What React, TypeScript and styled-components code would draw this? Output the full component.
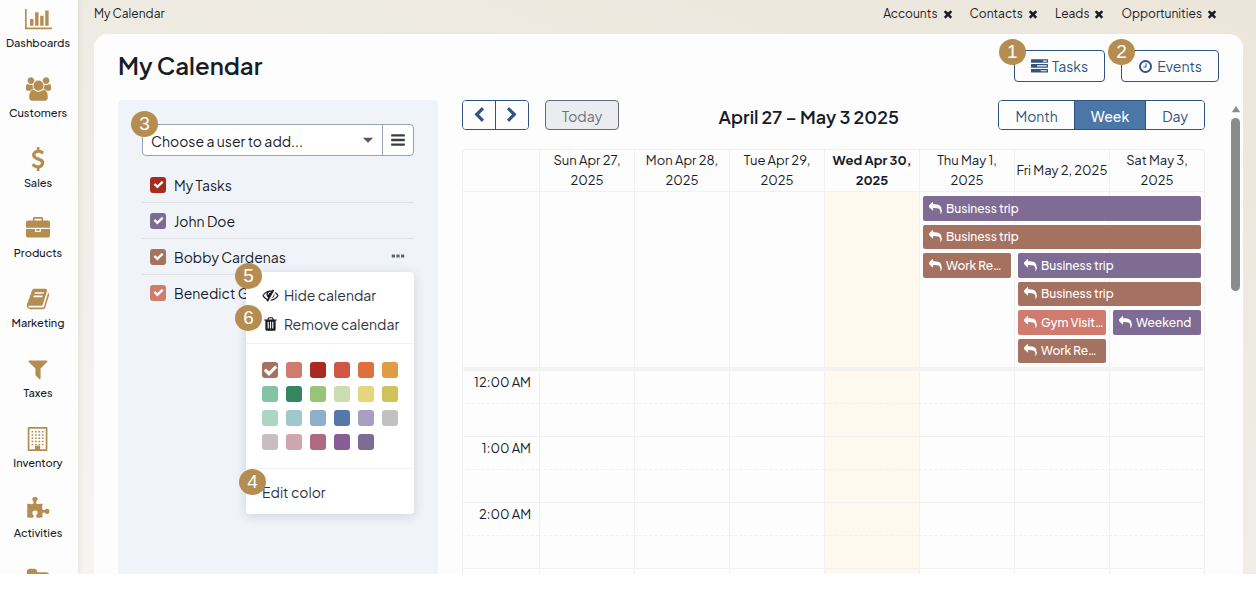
import React from "react";
import styled, { createGlobalStyle } from "styled-components";

const GOLD = "#b58d50";
const INK = "#181c27";
const BLUE = "#2f5480";
const LINE = "#f1f1f2";

const GlobalStyle = createGlobalStyle`
  *, *::before, *::after { box-sizing: border-box; }
  body { margin: 0; background: #fff; }
  body, button, select, input {
    font-family: "Plus Jakarta Sans", Figtree, Inter, "Liberation Sans", sans-serif;
    color: ${INK};
  }
  button { padding: 0; cursor: pointer; }
  ul { list-style: none; margin: 0; padding: 0; }
`;

const BAR = (y: number) =>
  `M1664 ${y}v128q0 26-19 45t-45 19h-1408q-26 0-45-19t-19-45v-128q0-26 19-45t45-19h1408q26 0 45 19t19 45z`;
const TASK = (y: number) =>
  `M1792 ${y}v256q0 26-19 45t-45 19h-1664q-26 0-45-19t-19-45v-256q0-26 19-45t45-19h1664q26 0 45 19t19 45z`;
const SLOT = (x: number) =>
  `M${x} 1376v-704q0-14-9-23t-23-9h-64q-14 0-23 9t-9 23v704q0 14 9 23t23 9h64q14 0 23-9t9-23z`;

const windows = [300, 540, 780, 1020, 1260]
  .map((y) => [480, 736, 992, 1248].map((x) => `M${x - 64} ${y}h128v110h-128z`).join(""))
  .join("");

const PATHS = {
  check:
    "M1671 566q0 40-28 68l-724 724-136 136q-28 28-68 28t-68-28l-136-136-362-362q-28-28-28-68t28-68l136-136q28-28 68-28t68 28l294 295 656-657q28-28 68-28t68 28l136 136q28 28 28 68z",
  bars: BAR(1344) + BAR(832) + BAR(320),
  times:
    "M1490 1322q0 40-28 68l-136 136q-28 28-68 28t-68-28l-294-294-294 294q-28 28-68 28t-68-28l-136-136q-28-28-28-68t28-68l294-294-294-294q-28-28-28-68t28-68l136-136q28-28 68-28t68 28l294 294 294-294q28-28 68-28t68 28l136 136q28 28 28 68t-28 68l-294 294 294 294q28 28 28 68z",
  filter:
    "M1595 295q17 41-14 70l-493 493v742q0 42-39 59-13 5-25 5-27 0-45-19l-256-256q-19-19-19-45v-486l-493-493q-31-29-14-70 17-39 59-39h1280q42 0 59 39z",
  left: "M1427 301l-531 531 531 531q19 19 19 45t-19 45l-166 166q-19 19-45 19t-45-19l-742-742q-19-19-19-45t19-45l742-742q19-19 45-19t45 19l166 166q19 19 19 45t-19 45z",
  right:
    "M1363 877l-742 742q-19 19-45 19t-45-19l-166-166q-19-19-19-45t19-45l531-531-531-531q-19-19-19-45t19-45l166-166q19-19 45-19t45 19l742 742q19 19 19 45t-19 45z",
  tasks:
    TASK(1216) + TASK(704) + TASK(192) + "M1024 1408h640v-128h-640zM640 896h1024v-128h-1024zM1280 384h384v-128h-384z",
  clock:
    "M1024 544v448q0 14-9 23t-23 9h-320q-14 0-23-9t-9-23v-64q0-14 9-23t23-9h224v-352q0-14 9-23t23-9h64q14 0 23 9t9 23zm416 352q0-148-73-273t-198-198-273-73-273 73-198 198-73 273 73 273 198 198 273 73 273-73 198-198 73-273zm224 0q0 209-103 385.5t-279.5 279.5-385.5 103-385.5-103-279.5-279.5-103-385.5 103-385.5 279.5-279.5 385.5-103 385.5 103 279.5 279.5 103 385.5z",
  chart:
    "M640 896v512h-256v-512h256zm384-512v1024h-256v-1024h256zm1024 1152v128h-2048v-1536h128v1408h1920zm-640-896v768h-256v-768h256zm384-384v1152h-256v-1152h256z",
  reply:
    "M1792 1120q0 166-127 451-3 7-10.5 24t-13.5 30-13 22q-12 17-28 17-15 0-23.5-10t-8.5-25q0-9 2.5-26.5t2.5-23.5q5-68 5-123 0-112-19.5-200.5t-54-153.5-89-112-117-78-146.5-46.5-169-21-192.5-5.5h-224v256q0 26-19 45t-45 19-45-19l-512-512q-19-19-19-45t19-45l512-512q19-19 45-19t45 19 19 45v256h224q713 0 875 403 53 134 53 333z",
  users:
    "M657 896q-162 5-265 128h-134q-82 0-138-40.5t-56-118.5q0-353 124-353 6 0 43.5 21t97.5 42.5 119 21.5q67 0 133-23-5 37-5 66 0 139 81 256zm1071 637q0 120-73 189.5t-194 69.5h-874q-121 0-194-69.5t-73-189.5q0-53 3.5-103.5t14-109 26.5-108.5 43-97.5 62-81 85.5-53.5 111.5-20q10 0 43 21.5t73 48 107 48 135 21.5 135-21.5 107-48 73-48 43-21.5q61 0 111.5 20t85.5 53.5 62 81 43 97.5 26.5 108.5 14 109 3.5 103.5zm-1024-1277q0 106-75 181t-181 75-181-75-75-181 75-181 181-75 181 75 75 181zm704 384q0 159-112.5 271.5t-271.5 112.5-271.5-112.5-112.5-271.5 112.5-271.5 271.5-112.5 271.5 112.5 112.5 271.5zm576 225q0 78-56 118.5t-138 40.5h-134q-103-123-265-128 81-117 81-256 0-29-5-66 66 23 133 23 59 0 119-21.5t97.5-42.5 43.5-21q124 0 124 353zm-128-609q0 106-75 181t-181 75-181-75-75-181 75-181 181-75 181 75 75 181z",
  dollar:
    "M1362 1185q0 153-99.5 263.5t-258.5 136.5v175q0 14-9 23t-23 9h-135q-13 0-22.5-9.5t-9.5-22.5v-175q-66-9-127.5-31t-101.5-44.5-74-48-46.5-37.5-17.5-18q-17-21-2-41l103-135q7-10 23-12 15-2 24 9l2 2q113 99 243 125 37 8 74 8 81 0 142.5-43t61.5-122q0-28-15-53t-33.5-42-58.5-37.5-66-32-80-32.5q-39-16-61.5-25t-61.5-26.5-62.5-31-56.5-35.5-53.5-42.5-43.5-49-35.5-58-21-66.5-8.5-78q0-138 98-242t255-134v-180q0-13 9.5-22.5t22.5-9.5h135q14 0 23 9t9 23v176q57 6 110.5 23t87 33.5 63.5 37.5 39 29 15 14q17 18 5 38l-81 146q-8 15-23 16-14 3-27-7-3-3-14.5-12t-39-26.5-58.5-32-74.5-26-85.5-11.5q-95 0-155 43t-60 111q0 26 8.5 48t29.5 41.5 39.5 33 56 31 60.5 27 70 27.5q53 20 81 31.5t76 35 75.5 42.5 62 50 53 63.5 31.5 76.5 13 94z",
  briefcase:
    "M640 256h512v-128h-512v128zm1152 640v480q0 66-47 113t-113 47h-1472q-66 0-113-47t-47-113v-480h672v160q0 26 19 45t45 19h320q26 0 45-19t19-45v-160h672zm-768 0v128h-256v-128h256zm768-480v384h-1792v-384q0-66 47-113t113-47h352v-160q0-40 28-68t68-28h576q40 0 68 28t28 68v160h352q66 0 113 47t47 113z",
  book: "M1703 478q40 57 18 129l-275 906q-19 64-76.5 107.5t-122.5 43.5h-923q-77 0-148.5-53.5t-99.5-131.5q-24-67-2-127 0-4 3-27t4-37q1-8-3-21.5t-3-19.5q2-11 8-21t16.5-23.5 16.5-23.5q23-38 45-91.5t30-91.5q3-10 .5-30t-.5-28q3-11 17-28t17-23q21-36 42-92t25-90q1-9-2.5-32t.5-28q4-13 22-30.5t22-22.5q19-26 42.5-84.5t27.5-96.5q1-8-3-25.5t-2-26.5q2-8 9-18t18-23 17-21q8-12 16.5-30.5t15-35 16-36 19.5-32 26.5-23.5 36-11.5 47.5 5.5l-1 3q38-9 51-9h761q74 0 114 56t18 130l-274 906q-36 119-71.5 153.5t-128.5 34.5h-869q-27 0-38 15-11 16-1 43 24 70 144 70h923q29 0 56-15.5t35-41.5l300-987q7-22 5-57 38 15 59 43zm-1064 2q-4 13 2 22.5t20 9.5h608q13 0 25.5-9.5t16.5-22.5l21-64q4-13-2-22.5t-20-9.5h-608q-13 0-25.5 9.5t-16.5 22.5zm-83 256q-4 13 2 22.5t20 9.5h608q13 0 25.5-9.5t16.5-22.5l21-64q4-13-2-22.5t-20-9.5h-608q-13 0-25.5 9.5t-16.5 22.5z",
  building:
    "M192 0h1344q64 0 64 64v1664q0 64-64 64h-1344q-64 0-64-64v-1664q0-64 64-64zM256 128v1536h416v-256h384v256h416v-1536z" +
    windows,
  puzzle:
    "M1755 1083q0 81-44.5 135t-123.5 54q-41 0-77.5-17.5t-59-38-56.5-38-71-17.5q-110 0-110 124 0 39 16 115t15 115v5q-22 0-33 1-34 3-97.5 11.5t-115.5 13.5-98 5q-61 0-103-26.5t-42-83.5q0-37 17.5-71t38-56.5 38-59 17.5-77.5q0-79-54-123.5t-135-44.5q-84 0-143 45.5t-59 127.5q0 43 15 83t33.5 64.5 33.5 53 15 50.5q0 45-46 89-37 35-117 35-95 0-245-24-9-2-27.5-4t-27.5-4l-13-2q-1 0-3-1-2 0-2-1v-1024q2 1 17.5 3.5t34 5 21.5 3.5q150 24 245 24 80 0 117-35 46-44 46-89 0-22-15-50.5t-33.5-53-33.5-64.5-15-83q0-82 59-127.5t144-45.5q80 0 134 44.5t54 123.5q0 41-17.5 77.5t-38 59-38 56.5-17.5 71q0 57 42 83.5t103 26.5q64 0 180-15t163-17v2q-1 2-3.5 17.5t-5 34-3.5 21.5q-24 150-24 245 0 80 35 117 44 46 89 46 22 0 50.5-15t53-33.5 64.5-33.5 83-15q82 0 127.5 59t45.5 143z",
  folder:
    "M1728 608v704q0 92-66 158t-158 66h-1216q-92 0-158-66t-66-158v-960q0-92 66-158t158-66h320q92 0 158 66t66 158v32h672q92 0 158 66t66 158z",
  trash:
    SLOT(704) +
    SLOT(960) +
    SLOT(1216) +
    "M672 384h448l-48-117q-7-9-17-11h-317q-10 2-17 11zM1600 416v64q0 14-9 23t-23 9h-96v948q0 83-47 143.5t-113 60.5h-832q-66 0-113-58.5t-47-141.5v-952h-96q-14 0-23-9t-9-23v-64q0-14 9-23t23-9h309l70-167q15-37 54-63t79-26h320q40 0 79 26t54 63l70 167h309q14 0 23 9t9 23z",
  eyeSlash:
    "M555 1335l78-141q-87-63-136-159t-49-203q0-121 61-225-229 117-381 353 167 258 427 375zm389-759q0-20-14-34t-34-14q-125 0-214.5 89.5t-89.5 214.5q0 20 14 34t34 14 34-14 14-34q0-86 61-147t147-61q20 0 34-14t14-34zm363-191q0 7-1 9-106 189-316 567t-315 566l-49 89q-10 16-28 16-12 0-134-70-16-10-16-28 0-12 44-87-143-65-263.5-173t-208.5-245q-20-31-20-69t20-69q153-235 380-371t496-136q89 0 180 17l54-97q10-16 28-16 5 0 18 6t31 15.5 33 18.5 31.5 18.5 19.5 11.5q16 10 16 27zm37 447q0 139-79 253.5t-209 164.5l280-502q8 45 8 84zm448 128q0 35-20 69-39 64-109 145-150 172-347.5 267t-419.5 95l74-132q212-18 392.5-137t301.5-307q-115-179-282-294l63-112q95 64 182.5 153t144.5 184q20 34 20 69z",
  caret: "M320 640h1152l-576 576z",
  up: "M896 380l760 1100h-1520z",
  dots: "M160 704h288q64 0 64 64v256q0 64-64 64h-288q-64 0-64-64v-256q0-64 64-64zM752 704h288q64 0 64 64v256q0 64-64 64h-288q-64 0-64-64v-256q0-64 64-64zM1344 704h288q64 0 64 64v256q0 64-64 64h-288q-64 0-64-64v-256q0-64 64-64z",
};

type IconName = keyof typeof PATHS;

const Svg = styled.svg`
  display: block;
  flex: none;
  fill: currentColor;
`;

function Icon({ name, size, box = 1792 }: { name: IconName; size: number; box?: number }) {
  return (
    <Svg width={Math.round((size * box) / 1792)} height={size} viewBox={`0 0 ${box} 1792`} aria-hidden="true">
      <path fillRule="evenodd" d={PATHS[name]} />
    </Svg>
  );
}

const Shell = styled.div`
  display: flex;
  height: calc(100vh - 29px);
  overflow: hidden;
  background: linear-gradient(200deg, #ece6da 0%, #eeebe3 40%, #f6f5f1 100%);
`;

const SideNav = styled.nav`
  width: 78px;
  flex: none;
  padding-top: 7px;
  background: #fdfdfd;
  box-shadow: 0 0 6px rgba(60, 50, 30, 0.12);
`;

const NavList = styled.ul`
  display: flex;
  flex-direction: column;
  gap: 26px;
`;

const NavLink = styled.a`
  display: flex;
  flex-direction: column;
  align-items: center;
  gap: 4px;
  padding-right: 2px;
  color: ${GOLD};
  text-decoration: none;

  span {
    font-size: 11px;
    font-weight: 500;
    line-height: 16px;
    color: ${INK};
  }
`;

const Main = styled.main`
  flex: 1;
  min-width: 0;
  display: flex;
  flex-direction: column;
  padding: 0 13px 0 16px;
`;

const TopBar = styled.header`
  display: flex;
  align-items: center;
  justify-content: space-between;
  height: 34px;
  flex: none;
  padding: 0 25px 6px 0;
  font-size: 12px;
  line-height: 16px;
`;

const TabList = styled.ul`
  display: flex;
  gap: 16px;
`;

const Tab = styled.li`
  display: flex;
  align-items: center;
  gap: 4px;

  a {
    color: ${INK};
    text-decoration: none;
  }
`;

const PlainButton = styled.button`
  display: flex;
  border: 0;
  background: none;
`;

const MoreButton = styled(PlainButton)`
  color: #5f636d;
  padding: 0 1px 1px 0;
`;

const Panel = styled.section`
  flex: 1;
  min-height: 0;
  display: flex;
  flex-direction: column;
  background: #fdfdfd;
  border-radius: 14px 14px 0 0;
`;

const PanelHead = styled.div`
  display: flex;
  align-items: center;
  justify-content: space-between;
  flex: none;
  height: 66px;
  padding: 0 24px 2px;
`;

const PageTitle = styled.h1`
  margin: 0;
  padding-bottom: 2px;
  font-size: 24px;
  font-weight: 600;
  line-height: 32px;
`;

const Actions = styled.div`
  display: flex;
  gap: 16px;
`;

const Anchor = styled.div`
  position: relative;
`;

const ActionButton = styled.button`
  display: flex;
  align-items: center;
  gap: 4px;
  height: 32px;
  padding: 0 16px;
  border: 1px solid ${BLUE};
  border-radius: 4px;
  background: #fdfdfd;
  color: ${BLUE};
  font-size: 14px;
`;

const Badge = styled.span<{ $top: number; $left: number }>`
  position: absolute;
  z-index: 3;
  top: ${(p) => p.$top}px;
  left: ${(p) => p.$left}px;
  width: 27px;
  height: 26px;
  border-radius: 50%;
  background: ${GOLD};
  color: #fff;
  font: 19px/26px "Liberation Sans", Arial, sans-serif;
  text-align: center;
`;

const Body = styled.div`
  flex: 1;
  min-height: 0;
  display: flex;
  gap: 24px;
  padding-left: 24px;
`;

const UserPanel = styled.aside`
  width: 320px;
  flex: none;
  padding: 24px;
  background: #f0f4f9;
  border-radius: 4px 4px 0 0;
`;

const Picker = styled.div`
  position: relative;
  display: flex;
  height: 32px;
  border: 1px solid #98a2b8;
  border-radius: 4px;
  background: #fff;
`;

const SelectWrap = styled.label`
  flex: 1;
  display: grid;
  align-items: center;
  color: #55585f;

  > * {
    grid-area: 1 / 1;
  }
  > svg {
    justify-self: end;
    margin-right: 6px;
    pointer-events: none;
  }
`;

const Select = styled.select`
  appearance: none;
  width: 100%;
  height: 30px;
  padding: 1px 28px 0 8px;
  border: 0;
  background: none;
  font-size: 14px;
`;

const ListButton = styled.button`
  display: grid;
  place-items: center;
  width: 31px;
  border: 0;
  border-left: 1px solid #98a2b8;
  background: none;
  color: #3a3d46;
`;

const UserList = styled.ul`
  margin-top: 11px;
`;

const UserRow = styled.li`
  position: relative;
  display: flex;
  align-items: center;
  justify-content: space-between;
  height: 36px;
  padding: 0 8px;
  border-bottom: 1px solid #e0e1e4;
  font-size: 14px;

  &:last-child {
    border-bottom-color: transparent;
  }
`;

const UserLabel = styled.label`
  display: flex;
  align-items: center;
  gap: 8px;
`;

const Tick = styled.span`
  display: grid;
  place-items: center;
  color: #fff;

  > * {
    grid-area: 1 / 1;
  }
  > svg {
    pointer-events: none;
  }
`;

const ColorInput = styled.input<{ $color: string }>`
  appearance: none;
  width: 16px;
  height: 16px;
  margin: 0;
  border-radius: 3px;
  background: ${(p) => p.$color};
`;

const Menu = styled.div`
  position: absolute;
  z-index: 2;
  top: 33px;
  right: 0;
  width: 168px;
  background: #fff;
  border-radius: 4px;
  box-shadow: 0 2px 12px rgba(30, 40, 60, 0.16);
`;

const MenuGroup = styled.div`
  padding: 8px 0 5px;
`;

const MenuButton = styled.button`
  display: flex;
  align-items: center;
  gap: 5px;
  width: 100%;
  height: 29px;
  padding: 0 16px;
  border: 0;
  background: none;
  color: #30343f;
  font-size: 14px;
  white-space: nowrap;

  svg {
    width: 17px;
    color: ${INK};
  }
`;

const Swatches = styled.fieldset`
  display: grid;
  grid-template-columns: repeat(6, 16px);
  gap: 8px;
  min-width: 0;
  margin: 0;
  padding: 18px 16px;
  border: solid #f0f1f3;
  border-width: 1px 0;
`;

const MenuFoot = styled.div`
  padding: 8px 0;
`;

const Calendar = styled.section`
  flex: 1;
  min-width: 0;
`;

const Toolbar = styled.div`
  display: flex;
  align-items: center;
  justify-content: space-between;
  height: 30px;
  margin-bottom: 19px;
`;

const ToolGroup = styled.div`
  display: flex;
  gap: 16px;
`;

const ButtonSet = styled.div`
  display: flex;
  border: 1px solid ${BLUE};
  border-radius: 4px;
  overflow: hidden;
`;

const SetButton = styled.button<{ $active?: boolean; $icon?: boolean }>`
  display: flex;
  align-items: center;
  height: 28px;
  padding: ${(p) => (p.$icon ? "0 8px" : "2px 16px 0")};
  border: 0;
  background: ${(p) => (p.$active ? "#4a76a8" : "#fdfdfd")};
  color: ${(p) => (p.$active ? "#fff" : BLUE)};
  font-size: 14px;
  font-weight: ${(p) => (p.$active ? 500 : 400)};

  & + & {
    border-left: 1px solid ${BLUE};
  }
`;

const TodayButton = styled.button`
  height: 30px;
  padding: 2px 16px 0;
  border: 1px solid #646b7a;
  border-radius: 4px;
  background: #ebecf0;
  color: #6d717b;
  font-size: 14px;
`;

const RangeTitle = styled.h2`
  margin: 0;
  padding-top: 4px;
  font-size: 18px;
  font-weight: 600;
  line-height: 24px;
`;

const Grid = styled.div`
  border: solid ${LINE};
  border-width: 1px 1px 0 0;
  border-radius: 4px 4px 0 0;
`;

const Table = styled.table`
  width: 100%;
  table-layout: fixed;
  border-collapse: separate;
  border-spacing: 0;

  th:first-child, td:first-child { width: 77px; }
`;

const DayHead = styled.th<{ $today?: boolean }>`
  height: 42px;
  padding: 0 0 1px;
  border-left: 1px solid ${LINE};
  border-bottom: 1px solid ${LINE};
  font-size: 13px;
  font-weight: ${(p) => (p.$today ? 700 : 400)};
  line-height: 20px;
`;

const AllDay = styled.div`
  display: grid;
  grid-template-columns: 77px repeat(7, minmax(0, 1fr));
  grid-template-rows: 2px repeat(6, minmax(0, 1fr)) 2px;
  height: 175px;
`;

const DayColumn = styled.div<{ $col: number; $today?: boolean }>`
  grid-column: ${(p) => p.$col};
  grid-row: 1 / -1;
  border-left: 1px solid ${LINE};
  background: ${(p) => (p.$today ? "#fff8ee" : "transparent")};
`;

const Event = styled.a<{ $col: number; $span: number; $row: number; $color: string }>`
  grid-column: ${(p) => p.$col} / span ${(p) => p.$span};
  grid-row: ${(p) => p.$row + 1};
  display: flex;
  align-items: center;
  gap: 4px;
  margin: 2px 3px 2px 4px;
  padding: 0 2px 0 6px;
  border-radius: 2px;
  background: ${(p) => p.$color};
  color: #fff;
  font-size: 12px;
  font-weight: 500;
  text-decoration: none;

  span {
    overflow: hidden;
    text-overflow: ellipsis;
    white-space: nowrap;
  }
`;

const Divider = styled.div`
  height: 4px;
  background: #f2f2f2;
`;

const Slot = styled.td<{ $today?: boolean; $half?: boolean }>`
  height: 33px;
  padding: 0;
  border-left: 1px solid ${LINE};
  border-bottom: 1px ${(p) => (p.$half ? "solid" : "dashed")} ${LINE};
  background: ${(p) => (p.$today ? "#fff8ee" : "transparent")};
`;

const SlotLabel = styled(Slot).attrs({ as: "th", scope: "row" })`
  width: 77px;
  padding: 1px 8px 0 0;
  font-size: 13px;
  font-weight: 400;
  line-height: 20px;
  text-align: right;
  vertical-align: top;
`;

const ScrollTrack = styled.div`
  width: 14px;
  flex: none;
  display: flex;
  flex-direction: column;
  align-items: center;
  gap: 4px;
  padding: 4px 1px 0 0;
  color: #8b8b8b;
`;

const ScrollThumb = styled.div`
  width: 9px;
  height: 173px;
  border-radius: 5px;
  background: #8b8b8b;
`;

const NAV: { label: string; icon: IconName; box?: number }[] = [
  { label: "Dashboards", icon: "chart", box: 2048 },
  { label: "Customers", icon: "users", box: 2048 },
  { label: "Sales", icon: "dollar" },
  { label: "Products", icon: "briefcase" },
  { label: "Marketing", icon: "book" },
  { label: "Taxes", icon: "filter" },
  { label: "Inventory", icon: "building" },
  { label: "Activities", icon: "puzzle" },
  { label: "Projects", icon: "folder" },
];

const TABS = ["Accounts", "Contacts", "Leads", "Opportunities"];

const USERS = [
  { name: "My Tasks", color: "#a82c1e" },
  { name: "John Doe", color: "#7f6c94" },
  { name: "Bobby Cardenas", color: "#a57261" },
  { name: "Benedict Grant", color: "#cf7c6e" },
];

const COLORS = [
  "#a57261", "#cf7c6e", "#a82c1e", "#ce5642", "#df6f3e", "#e09c44",
  "#82c4a5", "#368560", "#97c37b", "#cbdfae", "#e5d57d", "#d0c15a",
  "#acd6c2", "#9fc8cd", "#8eaec9", "#5677aa", "#a99dc4", "#c1c1c1",
  "#c9bcc0", "#cfa5af", "#af6a82", "#8a5c97", "#7f6c94",
];

const DAYS = [
  "Sun Apr 27, 2025",
  "Mon Apr 28, 2025",
  "Tue Apr 29, 2025",
  "Wed Apr 30, 2025",
  "Thu May 1, 2025",
  "Fri May 2, 2025",
  "Sat May 3, 2025",
];
const TODAY = 3;

const PURPLE = "#7f6c94";
const BROWN = "#a57261";
const EVENTS = [
  { title: "Business trip", col: 6, span: 3, row: 1, color: PURPLE },
  { title: "Business trip", col: 6, span: 3, row: 2, color: BROWN },
  { title: "Work Remotely", col: 6, span: 1, row: 3, color: BROWN },
  { title: "Business trip", col: 7, span: 2, row: 3, color: PURPLE },
  { title: "Business trip", col: 7, span: 2, row: 4, color: BROWN },
  { title: "Gym Visitation", col: 7, span: 1, row: 5, color: "#cf7c6e" },
  { title: "Weekend", col: 8, span: 1, row: 5, color: PURPLE },
  { title: "Work Remotely", col: 7, span: 1, row: 6, color: BROWN },
];

const SLOTS = ["12:00 AM", "", "1:00 AM", "", "2:00 AM", "", "3:00 AM"];

function CalendarMenu() {
  return (
    <Menu>
      <Badge $top={-9} $left={-11}>5</Badge>
      <Badge $top={33} $left={-11}>6</Badge>
      <Badge $top={197} $left={-7}>4</Badge>
      <MenuGroup>
        <MenuButton type="button"><Icon name="eyeSlash" size={16} />Hide calendar</MenuButton>
        <MenuButton type="button"><Icon name="trash" size={16} />Remove calendar</MenuButton>
      </MenuGroup>
      <Swatches aria-label="Calendar color">
        {COLORS.map((color, i) => (
          <Tick key={color}>
            <ColorInput type="radio" name="calendar-color" aria-label={color} defaultChecked={i === 0} $color={color} />
            {i === 0 && <Icon name="check" size={15} />}
          </Tick>
        ))}
      </Swatches>
      <MenuFoot>
        <MenuButton type="button">Edit color</MenuButton>
      </MenuFoot>
    </Menu>
  );
}

export default function App() {
  return (
    <>
      <GlobalStyle />
      <Shell>
        <SideNav>
          <NavList>
            {NAV.map((item) => (
              <li key={item.label}>
                <NavLink href="#">
                  <Icon name={item.icon} size={24} box={item.box} />
                  <span>{item.label}</span>
                </NavLink>
              </li>
            ))}
          </NavList>
        </SideNav>
        <Main>
          <TopBar>
            <span>My Calendar</span>
            <TabList>
              {TABS.map((tab) => (
                <Tab key={tab}>
                  <a href="#">{tab}</a>
                  <PlainButton type="button" aria-label={`Close ${tab}`}><Icon name="times" size={12} /></PlainButton>
                </Tab>
              ))}
            </TabList>
          </TopBar>
          <Panel>
            <PanelHead>
              <PageTitle>My Calendar</PageTitle>
              <Actions>
                <Anchor>
                  <ActionButton type="button"><Icon name="tasks" size={17} />Tasks</ActionButton>
                  <Badge $top={-11} $left={-15}>1</Badge>
                </Anchor>
                <Anchor>
                  <ActionButton type="button"><Icon name="clock" size={15} />Events</ActionButton>
                  <Badge $top={-11} $left={-13}>2</Badge>
                </Anchor>
              </Actions>
            </PanelHead>
            <Body>
              <UserPanel>
                <Picker>
                  <Badge $top={-14} $left={-12}>3</Badge>
                  <SelectWrap>
                    <Select aria-label="Choose a user to add">
                      <option>Choose a user to add...</option>
                    </Select>
                    <Icon name="caret" size={16} />
                  </SelectWrap>
                  <ListButton type="button" aria-label="Show users"><Icon name="bars" size={16} /></ListButton>
                </Picker>
                <UserList>
                  {USERS.map((user, i) => (
                    <UserRow key={user.name}>
                      <UserLabel>
                        <Tick>
                          <ColorInput type="checkbox" defaultChecked $color={user.color} />
                          <Icon name="check" size={11} />
                        </Tick>
                        {user.name}
                      </UserLabel>
                      {i === 2 && (
                        <>
                          <MoreButton type="button" aria-label="Calendar options"><Icon name="dots" size={14} /></MoreButton>
                          <CalendarMenu />
                        </>
                      )}
                    </UserRow>
                  ))}
                </UserList>
              </UserPanel>
              <Calendar>
                <Toolbar>
                  <ToolGroup>
                    <ButtonSet>
                      <SetButton type="button" $icon aria-label="Previous week"><Icon name="left" size={16} /></SetButton>
                      <SetButton type="button" $icon aria-label="Next week"><Icon name="right" size={16} /></SetButton>
                    </ButtonSet>
                    <TodayButton type="button">Today</TodayButton>
                  </ToolGroup>
                  <RangeTitle>April 27 – May 3 2025</RangeTitle>
                  <ButtonSet>
                    <SetButton type="button">Month</SetButton>
                    <SetButton type="button" $active>Week</SetButton>
                    <SetButton type="button">Day</SetButton>
                  </ButtonSet>
                </Toolbar>
                <Grid>
                  <Table>
                    <thead>
                      <tr>
                        <DayHead />
                        {DAYS.map((day, i) => (
                          <DayHead key={day} scope="col" $today={i === TODAY}>{day}</DayHead>
                        ))}
                      </tr>
                    </thead>
                  </Table>
                  <AllDay>
                    <DayColumn $col={1} />
                    {DAYS.map((day, i) => (
                      <DayColumn key={day} $col={i + 2} $today={i === TODAY} />
                    ))}
                    {EVENTS.map((e) => (
                      <Event key={`${e.col}-${e.row}`} href="#" $col={e.col} $span={e.span} $row={e.row} $color={e.color}>
                        <Icon name="reply" size={13} />
                        <span>{e.title}</span>
                      </Event>
                    ))}
                  </AllDay>
                  <Divider />
                  <Table>
                    <tbody>
                      {SLOTS.map((slot, r) => (
                        <tr key={r}>
                          <SlotLabel $half={r % 2 === 1}>{slot}</SlotLabel>
                          {DAYS.map((day, i) => (
                            <Slot key={day} $today={i === TODAY} $half={r % 2 === 1} />
                          ))}
                        </tr>
                      ))}
                    </tbody>
                  </Table>
                </Grid>
              </Calendar>
              <ScrollTrack>
                <Icon name="up" size={10} />
                <ScrollThumb />
              </ScrollTrack>
            </Body>
          </Panel>
        </Main>
      </Shell>
    </>
  );
}
